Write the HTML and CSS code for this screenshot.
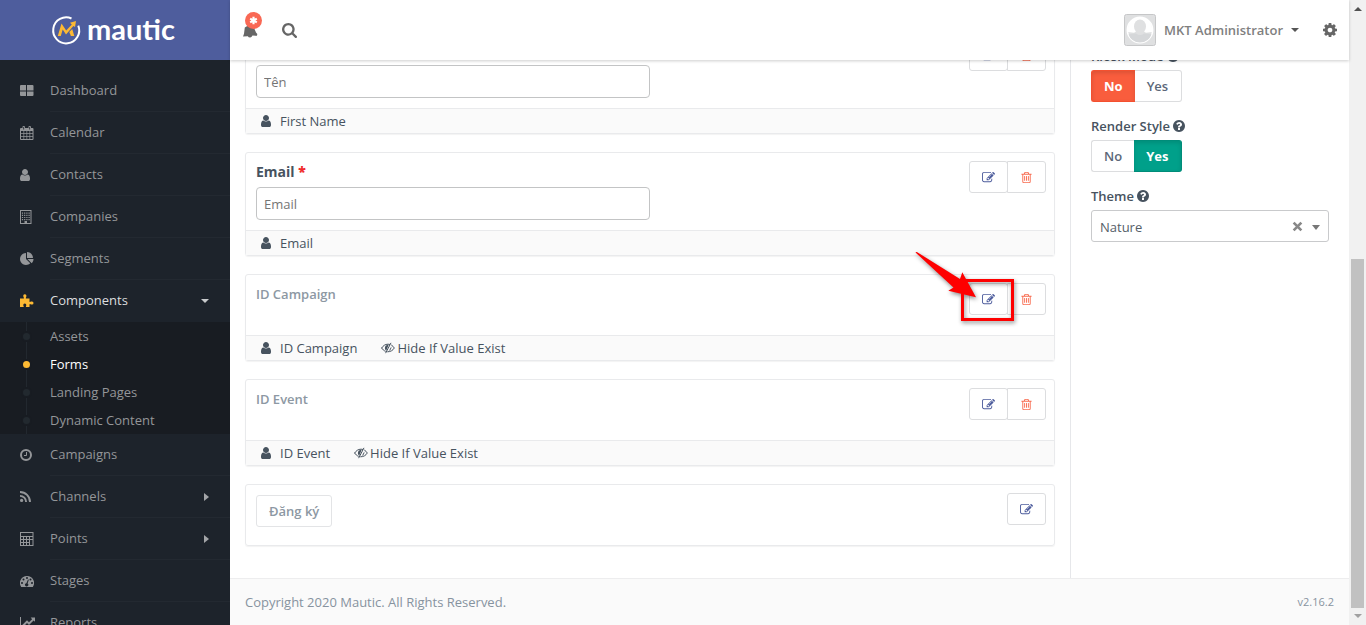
FILE: index.html
```html
<!DOCTYPE html>
<html lang="en">
<head>
<meta charset="utf-8">
<title>Mautic</title>
<link rel="stylesheet" href="styles.css">
</head>
<body>
<svg class="sprite" aria-hidden="true">
  <symbol id="i-user" viewBox="256 128 1280 1536"><path d="M1536 1399q0 109-62.5 187t-150.5 78h-854q-88 0-150.5-78t-62.5-187q0-85 8.5-160.5t31.5-152 58.5-131 94-89 134.5-34.5q131 128 313 128t313-128q76 0 134.5 34.5t94 89 58.5 131 31.5 152 8.5 160.5zm-256-887q0 159-112.5 271.5t-271.5 112.5-271.5-112.5-112.5-271.5 112.5-271.5 271.5-112.5 271.5 112.5 112.5 271.5z"/></symbol>
  <symbol id="i-edit" viewBox="0 0 1792 1792"><path d="M888 1184l116-116-152-152-116 116v56h96v96h56zm440-720q-16-16-33 1l-350 350q-17 17-1 33t33-1l350-350q17-17 1-33zm80 594v190q0 119-84.5 203.5t-203.5 84.5h-832q-119 0-203.5-84.5t-84.5-203.5v-832q0-119 84.5-203.5t203.5-84.5h832q63 0 117 25 15 7 18 23 3 17-9 29l-49 49q-14 14-32 8-23-6-45-6h-832q-66 0-113 47t-47 113v832q0 66 47 113t113 47h832q66 0 113-47t47-113v-126q0-13 9-22l64-64q15-15 35-7t20 29zm-96-738l288 288-672 672h-288v-288zm444 132l-92 92-288-288 92-92q28-28 68-28t68 28l152 152q28 28 28 68t-28 68z"/></symbol>
  <symbol id="i-trash" viewBox="0 0 1792 1792"><path d="M704 736v576q0 14-9 23t-23 9h-64q-14 0-23-9t-9-23v-576q0-14 9-23t23-9h64q14 0 23 9t9 23zm256 0v576q0 14-9 23t-23 9h-64q-14 0-23-9t-9-23v-576q0-14 9-23t23-9h64q14 0 23 9t9 23zm256 0v576q0 14-9 23t-23 9h-64q-14 0-23-9t-9-23v-576q0-14 9-23t23-9h64q14 0 23 9t9 23zm128 724v-948h-896v948q0 22 7 40.5t14.5 27 10.5 8.5h832q3 0 10.5-8.5t14.5-27 7-40.5zm-672-1076h448l-48-117q-7-9-17-11h-317q-10 2-17 11zm928 32v64q0 14-9 23t-23 9h-96v948q0 83-47 143.5t-113 60.5h-832q-66 0-113-58.5t-47-141.5v-952h-96q-14 0-23-9t-9-23v-64q0-14 9-23t23-9h309l70-167q15-37 54-63t79-26h320q40 0 79 26t54 63l70 167h309q14 0 23 9t9 23z"/></symbol>
  <symbol id="i-help" viewBox="128 128 1536 1536"><path d="M1024 1376v-192q0-14-9-23t-23-9h-192q-14 0-23 9t-9 23v192q0 14 9 23t23 9h192q14 0 23-9t9-23zm256-672q0-88-55.5-163t-138.5-116-170-41q-243 0-371 213-15 24 8 42l132 100q7 6 19 6 16 0 25-12 53-68 86-92 34-24 86-24 48 0 85.5 26t37.5 59q0 38-20 61t-68 45q-63 28-115.5 86.5t-52.5 125.5v36q0 14 9 23t23 9h192q14 0 23-9t9-23q0-19 21.5-49.5t54.5-49.5q32-18 49-28.5t46-35 44.5-48 28-60.5 12.5-81zm384 192q0 209-103 385.5t-279.5 279.5-385.5 103-385.5-103-279.5-279.5-103-385.5 103-385.5 279.5-279.5 385.5-103 385.5 103 279.5 279.5 103 385.5z"/></symbol>
  <symbol id="i-hide" viewBox="0 0 14 12"><path d="M.7 6C2.100 3.600 4.300 2.200 7 2.200c.6 0 1.100.1 1.600.2M10.600 3.200C11.700 3.900 12.600 4.800 13.300 6 11.800 8.500 9.500 9.800 6.700 9.800M4.300 9.300C2.800 8.600 1.600 7.500.7 6M4.800 10.800 9.800 1.200" fill="none" stroke="currentColor" stroke-width="1" stroke-linecap="round"/><path d="M7.700 2.800A3.300 3.300 0 0 0 3.900 6c0 1.200.5 2.200 1.300 2.800zM10.300 4.600c.4 2-.6 3.900-2.500 4.500z"/></symbol>
</svg>
<div class="app">
  <aside class="sidebar">
    <a class="logo" href="#">
      <svg class="logo-mark" viewBox="0 0 28 28" aria-hidden="true"><path d="M19.500 2.500A13 13 0 1 0 26.300 9.600" fill="none" stroke="#fff" stroke-width="2"/><path d="M5.800 20 9.500 7.500 14.200 14.500 19.800 8.500 18 6.700 24 5 23 11 21.400 9.900 14 18.500 10.700 13.400 8.800 20z" fill="#fdb933"/><path d="M17.300 16 20.200 13 22.300 20h-3.400z" fill="#fdb933"/></svg>
      <span>mautic</span>
    </a>
    <nav class="nav">
      <a class="nav-item" href="#"><svg class="nav-icon" viewBox="0 0 14 14"><path d="M1 1h5v5.500H0V2q0-1 1-1zM7 1h5.500q1 0 1 1v4.500H7zM0 7.500h6V12H1q-1 0-1-1zM7 7.500h6.500V11q0 1-1 1H7z"/></svg><span>Dashboard</span></a>
      <a class="nav-item" href="#"><svg class="nav-icon" viewBox="0 0 14 14"><path fill-rule="evenodd" d="M1 2h1.500V.8Q2.500 0 3.700 0T5 .8V2h3.500V.8Q8.500 0 9.700 0T11 .8V2h1.500q1 0 1 1v10q0 1-1 1H1q-1 0-1-1V3q0-1 1-1zM1 5v2h2.500V5zm3.200 0v2h2.300V5zm3 0v2h2.300V5zm3 0v2h2.300V5zM1 7.700v2.200h2.500V7.700zm3.200 0v2.200h2.300V7.700zm3 0v2.200h2.300V7.700zm3 0v2.200h2.300V7.700zM1 10.700V13h2.500v-2.300zm3.200 0V13h2.300v-2.300zm3 0V13h2.300v-2.300zm3 0V13h2.300v-2.300zM3.300 1v2.500h.8V1zm6 0v2.500h.8V1z"/></svg><span>Calendar</span></a>
      <a class="nav-item" href="#"><svg class="nav-icon user"><use href="#i-user"/></svg><span>Contacts</span></a>
      <a class="nav-item" href="#"><svg class="nav-icon" viewBox="0 0 14 14"><path fill-rule="evenodd" d="M0 0h11.500v14H0zM1 1v12h3.500v-2h2.500v2h3.500V1z"/><path d="M2.500 2.500v8M4.700 2.500v8M6.900 2.500v8M9.100 2.500v8" fill="none" stroke="currentColor" stroke-width="1.200" stroke-dasharray="1.2 1"/></svg><span>Companies</span></a>
      <a class="nav-item" href="#"><svg class="nav-icon" viewBox="0 0 1792 1792"><path d="M768 890l546 546q-106 108-247.500 168t-298.500 60q-209 0-385.500-103t-279.500-279.500-103-385.500 103-385.500 279.500-279.500 385.500-103v762zm187 6h773q0 157-60 298.500t-168 247.500zm709-128h-768v-768q209 0 385.500 103t279.500 279.500 103 385.500z"/></svg><span>Segments</span></a>
      <a class="nav-item open" href="#"><svg class="nav-icon" viewBox="0 0 14 14"><path d="M0 4.500h3.800Q4.300 4 3.500 3 2.700.4 4.800.2 7 .4 6.200 3 5.400 4 6 4.500h3.500v3.300q.5.600 1.500-.2Q13.500 7 13.500 9T11 10.400q-1-.8-1.500-.1V13H6q-.4-.6.300-1.600Q6.500 9.600 4.800 9.500 3 9.600 3.300 11.400q.8 1 .3 1.600H0z"/></svg><span>Components</span><i class="caret down"></i></a>
      <div class="subnav">
        <a href="#">Assets</a>
        <a class="current" href="#">Forms</a>
        <a href="#">Landing Pages</a>
        <a href="#">Dynamic Content</a>
      </div>
      <a class="nav-item" href="#"><svg class="nav-icon" viewBox="0 0 14 14"><g fill="none" stroke="currentColor"><circle cx="6" cy="7" r="5" stroke-width="2"/><path d="M6.500 4v3.500H4" stroke-width="1"/></g></svg><span>Campaigns</span></a>
      <a class="nav-item" href="#"><svg class="nav-icon" viewBox="0 0 14 14"><circle cx="1.600" cy="10.400" r="1.600"/><path d="M0 5.900A6.100 6.100 0 0 1 6.100 12M0 2A10 10 0 0 1 10 12" fill="none" stroke="currentColor" stroke-width="1.900"/></svg><span>Channels</span><i class="caret right"></i></a>
      <a class="nav-item" href="#"><svg class="nav-icon" viewBox="0 0 14 14"><path fill-rule="evenodd" d="M0 0h13.500v14H0zM1 1v3h11.500V1zM1 5v2h2V5zm3 0v2h2V5zm3 0v2h2V5zm3 0v2h2.500V5zM1 8v2h2V8zm3 0v2h2V8zm3 0v2h2V8zm3 0v5h2.500V8zM1 11v2h2v-2zm3 0v2h2v-2zm3 0v2h2v-2z"/></svg><span>Points</span><i class="caret right"></i></a>
      <a class="nav-item" href="#"><svg class="nav-icon" viewBox="0 0 14 14"><path fill-rule="evenodd" d="M7 2A7 7 0 0 1 12.800 13H1.200A7 7 0 0 1 7 2zM7 3a1 1 0 1 0 0 2 1 1 0 0 0 0-2zM3.500 4.500a1 1 0 1 0 0 2 1 1 0 0 0 0-2zm7 0a1 1 0 1 0 0 2 1 1 0 0 0 0-2zM2 8a1 1 0 1 0 0 2 1 1 0 0 0 0-2zm10 0a1 1 0 1 0 0 2 1 1 0 0 0 0-2zM8 5.500 6.400 9.200a1.600 1.600 0 1 0 1.200.3L8.800 5.800z"/></svg><span>Stages</span></a>
      <a class="nav-item" href="#"><svg class="nav-icon wide" viewBox="0 0 16 14"><path d="M0 1h1v11h15v1H0zM15 1.500v4.300l-1.400-1.300L9 9 7 7l-3.500 3.700L2 9.200 7 4.300l2 2L12.100 3.200 10.700 1.500z"/></svg><span>Reports</span></a>
    </nav>
  </aside>

  <div class="main">
    <header class="topbar">
      <button class="icon-btn bell" aria-label="Notifications"><svg viewBox="0 0 16 16"><path d="M1 14.500 2 11.800 2.800 5.500Q5 3.500 8 3.500T12.500 7L14 10.500 15.300 12 15 13.800 10.500 13.600Q9.500 15.600 8 15.500T5.800 14.200z"/></svg><span class="badge"><svg viewBox="0 0 10 10"><path d="M5 .8v8.400M1.300 2.900l7.400 4.200M8.700 2.900 1.300 7.100" stroke="#fff" stroke-width="2.400"/></svg></span></button>
      <button class="icon-btn search" aria-label="Search"><svg viewBox="64 128 1664 1664"><path d="M1216 832q0-185-131.500-316.500t-316.500-131.500-316.500 131.500-131.500 316.500 131.500 316.500 316.500 131.500 316.500-131.500 131.500-316.500zm512 832q0 52-38 90t-90 38q-54 0-90-38l-343-342q-179 124-399 124-143 0-273.500-55.500t-225-150-150-225-55.500-273.500 55.500-273.500 150-225 225-150 273.500-55.500 273.500 55.500 225 150 150 225 55.500 273.500q0 220-124 399l343 343q37 37 37 90z"/></svg></button>
      <button class="account"><svg class="avatar" viewBox="0 0 32 32"><rect x=".5" y=".5" width="31" height="31" rx="2" fill="#dfe0e1" stroke="#c6c7c8"/><circle cx="16" cy="16" r="12.700" fill="#dfe0e1" stroke="#fff" stroke-width="1.500"/><path d="M4.500 20.500Q10 19 12 19.500q4 3 8 0 2-.5 7.500 1A12.500 12.500 0 0 1 16 28.500 12.500 12.500 0 0 1 4.500 20.500z" fill="#d5d7d9"/><path d="M4 15A12 12 0 0 1 28 15v3l-6 .8-2.700-1.500h-6.600L10 18.800 4 18z" fill="#fff"/><ellipse cx="16" cy="12.500" rx="6" ry="7" fill="#dfe0e1"/></svg><span>MKT Administrator</span><i class="caret down"></i></button>
      <button class="icon-btn cog" aria-label="Settings"><svg viewBox="128 128 1536 1536"><path d="M1152 896q0-106-75-181t-181-75-181 75-75 181 75 181 181 75 181-75 75-181zm512-109v222q0 12-8 23t-20 13l-185 28q-19 54-39 91 35 50 107 138 10 12 10 25t-9 23q-27 37-99 108t-94 71q-12 0-26-9l-138-108q-44 23-91 38-16 136-29 186-7 28-36 28h-222q-14 0-24.500-8.500t-11.500-21.500l-28-184q-49-16-90-37l-141 107q-10 9-25 9-14 0-25-11-126-114-165-168-7-10-7-23 0-12 8-23 15-21 51-66.500t54-70.500q-27-50-41-99l-183-27q-13-2-21-12.500t-8-23.500v-222q0-12 8-23t19-13l186-28q14-46 39-92-40-57-107-138-10-12-10-24 0-10 9-23 26-36 98.500-107.500t94.500-71.500q13 0 26 10l138 107q44-23 91-38 16-136 29-186 7-28 36-28h222q14 0 24.500 8.500t11.500 21.500l28 184q49 16 90 37l142-107q9-9 24-9 13 0 25 10 129 119 165 170 7 8 7 22 0 12-8 23-15 21-51 66.500t-54 70.500q26 50 41 98l183 28q13 2 21 12.500t8 23.500z"/></svg></button>
    </header>

    <div class="content">
      <main class="fields">
        <section class="card">
          <div class="card-body">
            <div class="field"><label for="f-name">Tên</label><input id="f-name" type="text" placeholder="Tên"></div>
            <div class="actions"><button aria-label="Edit"><svg><use href="#i-edit"/></svg></button><button class="danger" aria-label="Delete"><svg><use href="#i-trash"/></svg></button></div>
          </div>
          <div class="card-foot"><svg class="user"><use href="#i-user"/></svg><span>First Name</span></div>
        </section>
        <section class="card">
          <div class="card-body">
            <div class="field"><label for="f-email">Email <b class="req">*</b></label><input id="f-email" type="text" placeholder="Email"></div>
            <div class="actions"><button aria-label="Edit"><svg><use href="#i-edit"/></svg></button><button class="danger" aria-label="Delete"><svg><use href="#i-trash"/></svg></button></div>
          </div>
          <div class="card-foot"><svg class="user"><use href="#i-user"/></svg><span>Email</span></div>
        </section>
        <section class="card">
          <div class="card-body">
            <div class="field"><span class="hidden-label">ID Campaign</span></div>
            <div class="actions"><button aria-label="Edit"><svg><use href="#i-edit"/></svg></button><button class="danger" aria-label="Delete"><svg><use href="#i-trash"/></svg></button>
              <svg class="callout" viewBox="0 0 110 80" aria-hidden="true"><rect x="53.500" y="34.500" width="50" height="39" fill="none" stroke="#fe0000" stroke-width="3"/><path d="M6.500 6.600Q7 5.700 8.300 6.300L51 33 53.300 26.300 67 51.300 39.300 44.700 44.500 41.500z" fill="#fe0000"/></svg>
            </div>
          </div>
          <div class="card-foot"><svg class="user"><use href="#i-user"/></svg><span>ID Campaign</span><svg class="hide"><use href="#i-hide"/></svg><span>Hide If Value Exist</span></div>
        </section>
        <section class="card">
          <div class="card-body">
            <div class="field"><span class="hidden-label">ID Event</span></div>
            <div class="actions"><button aria-label="Edit"><svg><use href="#i-edit"/></svg></button><button class="danger" aria-label="Delete"><svg><use href="#i-trash"/></svg></button></div>
          </div>
          <div class="card-foot"><svg class="user"><use href="#i-user"/></svg><span>ID Event</span><svg class="hide"><use href="#i-hide"/></svg><span>Hide If Value Exist</span></div>
        </section>
        <section class="card">
          <div class="card-body">
            <div class="field"><button class="submit">Đăng ký</button></div>
            <div class="actions"><button aria-label="Edit"><svg><use href="#i-edit"/></svg></button></div>
          </div>
        </section>
      </main>
      <aside class="settings">
        <div class="setting">
          <span class="setting-label">Kiosk Mode <svg><use href="#i-help"/></svg></span>
          <div class="toggle no"><label><input type="radio" name="kiosk" checked>No</label><label><input type="radio" name="kiosk">Yes</label></div>
        </div>
        <div class="setting">
          <span class="setting-label">Render Style <svg><use href="#i-help"/></svg></span>
          <div class="toggle yes"><label><input type="radio" name="style">No</label><label><input type="radio" name="style" checked>Yes</label></div>
        </div>
        <div class="setting">
          <label class="setting-label" for="theme">Theme <svg><use href="#i-help"/></svg></label>
          <div class="select"><select id="theme"><option>Nature</option></select><button class="clear" aria-label="Clear theme"><svg viewBox="0 0 10 10"><path d="M1.500 1.500l7 7M8.500 1.500l-7 7" stroke="#888" stroke-width="2.400"/></svg></button><i class="caret down"></i></div>
        </div>
      </aside>
    </div>
    <footer class="footer"><span>Copyright 2020 Mautic. All Rights Reserved.</span><small>v2.16.2</small></footer>
  </div>
  <div class="scrollbar" aria-hidden="true"><i class="caret up"></i><div class="track"><div class="thumb"></div></div><i class="caret down"></i></div>
</div>
</body>
</html>
```
FILE: styles.css
```css
* { box-sizing: border-box; }
body { margin: 0; font: 13px/20px "Open Sans", "Noto Sans", sans-serif; color: #47535f; background: #fff; }
a { color: inherit; text-decoration: none; }
button, input, select { font: inherit; color: inherit; margin: 0; }
button { background: none; border: 0; padding: 0; cursor: pointer; }
svg { fill: currentColor; display: block; flex: none; }
.sprite { position: absolute; width: 0; height: 0; }
.user { width: 10px; height: 12px; }

.caret { width: 0; height: 0; flex: none; border: 4px solid transparent; }
.caret.down { border-top-color: currentColor; border-bottom-width: 0; }
.caret.up { border-bottom-color: currentColor; border-top-width: 0; }
.caret.right { border-left: 5px solid currentColor; border-right-width: 0; }

.app { display: flex; height: 100vh; overflow: hidden; }

.sidebar { width: 230px; flex: none; background: #1d232b; color: #949699; overflow: hidden; }
.logo { display: flex; align-items: center; justify-content: center; gap: 7px; height: 60px; padding-right: 3px; background: #4e5d9d; color: #fff; font: 700 29px/32px Lato, sans-serif; }
.logo span { padding-bottom: 2px; }
.logo-mark { width: 28px; height: 28px; overflow: visible; }
.nav { padding-top: 10px; }
.nav-item { position: relative; display: flex; align-items: center; height: 42px; padding-left: 20px; }
.nav-icon { width: 14px; height: 14px; margin-right: 16px; }
.nav-icon.user { width: 10px; height: 12px; margin-right: 20px; }
.nav-icon.wide { width: 16px; margin-right: 14px; }
.nav-item span { flex: 1; line-height: 41px; border-bottom: 1px solid #232931; }
.nav-item .caret { position: absolute; right: 21px; }
.nav-item.open { color: #fff; }
.nav-item.open span { color: #dcdddf; border-color: transparent; }
.nav-item.open .nav-icon { color: #fdb933; }
.nav-item.open .caret { color: #c8cacc; }
.nav-item .caret.right { color: #a3a5a8; }

.subnav { position: relative; background: #181c22; }
.subnav::before { content: ""; position: absolute; left: 26px; top: 0; bottom: 0; width: 1px; background: #22282f; }
.subnav a { display: block; position: relative; height: 28px; padding-left: 50px; line-height: 28px; }
.subnav a::before { content: ""; position: absolute; left: 21px; top: 9px; width: 11px; height: 11px; box-sizing: border-box; border: 2px solid #181c22; border-radius: 50%; background: #22292f; }
.subnav a.current { color: #fff; }
.subnav a.current::before { background: #fdb933; }

.main { flex: 1; min-width: 0; display: flex; flex-direction: column; }
.topbar { position: relative; z-index: 2; display: flex; align-items: center; flex: none; height: 60px; padding: 0 12px; background: #fff; color: #666; box-shadow: 0 1px 3px rgba(0, 0, 0, .2); }
.icon-btn { position: relative; }
.bell svg { width: 16px; height: 16px; }
.badge { position: absolute; right: -4px; top: -10px; display: grid; place-items: center; width: 17px; height: 17px; border-radius: 50%; background: #f96854; }
.bell .badge svg { width: 9px; height: 9px; }
.search { margin-left: 24px; }
.search svg { width: 15px; height: 15px; }
.account { display: flex; align-items: center; margin-left: auto; font-weight: 600; color: #808080; }
.avatar { width: 32px; height: 32px; margin-right: 8px; }
.account .caret { margin-left: 8px; color: #555; }
.cog { margin: 0 0 1px 24px; }
.cog svg { width: 14px; height: 14px; }

.content { display: flex; flex: 1; margin-top: -30px; }
.fields { display: flex; flex-direction: column; gap: 18px; flex: 1; padding: 0 15px 32px; }
.card { border: 1px solid #e9eaec; border-radius: 3px; box-shadow: 0 1px 1px rgba(0, 0, 0, .05); }
.card-body { display: flex; min-height: 60px; padding: 8px 8px 10px; }
.field { flex: 1; padding: 2px; }
.field label { display: block; height: 24px; font-size: 14px; font-weight: 700; line-height: 18px; }
.field input { display: block; width: 50%; min-width: 394px; height: 33px; padding: 0 7px; border: 1px solid #c3c4c5; border-radius: 4px; background: #fff; }
.card-body:has(input) { padding-bottom: 8px; }
.field input::placeholder { color: #757575; opacity: 1; }
.req { color: #f02c2c; }
.hidden-label { display: block; font-weight: 600; line-height: 18px; color: #8d98a3; }
.submit { height: 32px; padding: 0 12px; border: 1px solid #e3e4e6; border-radius: 3px; font-weight: 600; color: #8d98a3; }
.actions { position: relative; display: flex; align-self: flex-start; color: #4e5d9d; }
.actions button { display: grid; place-items: center; width: 39px; height: 32px; border: 1px solid #dcdddf; border-radius: 3px; }
.actions button svg { width: 13px; height: 13px; }
.actions .danger { margin-left: -1px; border-radius: 0 3px 3px 0; color: #f86b4f; }
.callout { position: absolute; left: -60px; top: -37px; width: 110px; height: 80px; filter: drop-shadow(1px 2px 2px rgba(0, 0, 0, .45)); pointer-events: none; }
.card-foot { display: flex; align-items: center; height: 25px; padding-left: 15px; border-top: 1px solid #e9eaec; background: #fafafa; }
.card-foot .user { margin-right: 9px; }
.card-foot .hide { width: 14px; height: 12px; margin: 0 2px 0 24px; }

.settings { width: 279px; flex: none; padding: 16px 20px 0; border-left: 1px solid #e6e7ea; }
.setting { margin-bottom: 14px; }
.setting-label { display: flex; align-items: center; gap: 3px; height: 20px; margin-bottom: 4px; font-weight: 600; }
.setting-label svg { width: 12px; height: 12px; }
.toggle { display: flex; font-weight: 600; color: #5b6778; }
.toggle label { height: 32px; padding: 0 12px; border: 1px solid #dcdddf; line-height: 30px; }
.toggle label:first-child { border-radius: 3px 0 0 3px; border-right: 0; }
.toggle label:last-child { padding-right: 13px; border-radius: 0 3px 3px 0; border-left: 0; }
.toggle input { position: absolute; opacity: 0; pointer-events: none; }
.toggle label:has(:checked) { font-weight: 700; color: #fff; box-shadow: inset 0 2px 4px rgba(0, 0, 0, .12); }
.toggle.no label:has(:checked) { background: #f95d3d; border-color: #f4502f; }
.toggle.yes label:has(:checked) { background: #00a08a; border-color: #008c79; }
.select { position: relative; color: #777; }
.select select { display: block; width: 100%; height: 32px; padding: 2px 8px 0; border: 1px solid #c9cacc; border-radius: 3px; background: #fff; color: #555e68; appearance: none; }
.clear { position: absolute; right: 26px; top: 11px; }
.clear svg { width: 11px; height: 11px; }
.select .caret { position: absolute; right: 9px; top: 15px; border-top-width: 5px; }

.footer { position: relative; display: flex; align-items: center; justify-content: space-between; flex: none; height: 47px; padding: 0 15px; border-top: 1px solid #ededee; background: #fafafa; color: #87939f; }
.footer small { font-size: 11px; }

.scrollbar { display: flex; flex-direction: column; align-items: center; flex: none; width: 17px; padding: 7px 0; background: #f1f1f1; color: #505050; }
.scrollbar .down { color: #a0a0a0; }
.track { display: flex; align-items: flex-end; flex: 1; padding: 6px 0; }
.thumb { width: 13px; height: 59%; background: #c1c1c1; }

*::before { box-sizing: border-box; }
```
